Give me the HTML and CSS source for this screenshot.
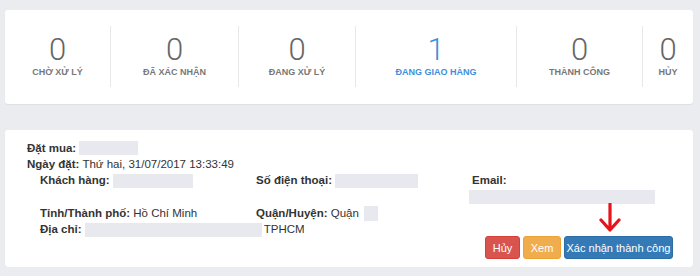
FILE: index.html
```html
<!DOCTYPE html>
<html lang="vi">
<head>
<meta charset="utf-8">
<link rel="stylesheet" href="styles.css">
</head>
<body>
<div class="card stats">
  <div class="stat"><div class="num">0</div><div class="lbl">CHỜ XỬ LÝ</div></div>
  <div class="stat"><div class="num">0</div><div class="lbl">ĐÃ XÁC NHẬN</div></div>
  <div class="stat"><div class="num">0</div><div class="lbl">ĐANG XỬ LÝ</div></div>
  <div class="stat active"><div class="num">1</div><div class="lbl">ĐANG GIAO HÀNG</div></div>
  <div class="stat"><div class="num">0</div><div class="lbl">THÀNH CÔNG</div></div>
  <div class="stat"><div class="num">0</div><div class="lbl">HỦY</div></div>
</div>

<div class="card order">
  <div class="line"><b>Đặt mua:</b> <span class="redact r-order"></span></div>
  <div class="line"><b>Ngày đặt:</b> Thứ hai, 31/07/2017 13:33:49</div>
  <div class="info">
    <div class="cell"><div class="line"><b>Khách hàng:</b> <span class="redact r-name"></span></div></div>
    <div class="cell"><div class="line"><b>Số điện thoại:</b> <span class="redact r-phone"></span></div></div>
    <div class="cell"><div class="line"><b>Email:</b></div><div class="redact r-email"></div></div>
    <div class="cell"><div class="line"><b>Tỉnh/Thành phố:</b> Hồ Chí Minh</div></div>
    <div class="cell"><div class="line"><b>Quận/Huyện:</b> Quận <span class="redact r-district"></span></div></div>
    <div class="cell"></div>
    <div class="cell wide"><div class="line"><b>Địa chỉ:</b> <span class="redact r-addr"></span>TPHCM</div></div>
  </div>
  <div class="actions">
    <button class="btn btn-red">Hủy</button>
    <button class="btn btn-orange">Xem</button>
    <button class="btn btn-blue">Xác nhận thành công</button>
  </div>
  <svg class="arrow" width="22" height="30" viewBox="0 0 22 30">
    <path d="M11 1 V27 M2 17 L11 27 L20 17" fill="none" stroke="#e8121b" stroke-width="3.2" stroke-linecap="round" stroke-linejoin="round"/>
  </svg>
</div>
</body>
</html>
```

FILE: styles.css
```css
html, body {
  margin: 0;
  padding: 0;
}
body {
  background: #ebecf0;
  font-family: "Liberation Sans", Arial, sans-serif;
  color: #333;
  padding: 10px 7px 0 5px;
}
.card {
  background: #fff;
  border-radius: 3px;
  box-shadow: 0 1px 1px rgba(0, 0, 0, 0.06);
}
.stats {
  height: 94px;
  box-sizing: border-box;
  padding-top: 16px;
  display: grid;
  grid-template-columns: 105px 128px 117px 161px 126px 1fr;
}
.stat {
  height: 61px;
  box-sizing: border-box;
  padding-top: 7px;
  text-align: center;
  border-left: 1px solid #e8e8e8;
}
.stat:first-child {
  border-left: none;
}
.num {
  font-family: Roboto, "Liberation Sans", sans-serif;
  font-weight: 300;
  font-size: 31px;
  line-height: 34px;
  color: #666;
}
.lbl {
  font-size: 9px;
  line-height: 12px;
  font-weight: bold;
  color: #777;
  margin-top: -1px;
}
.active .num,
.active .lbl {
  color: #3d8fdc;
}
.order {
  position: relative;
  margin-top: 26px;
  height: 137px;
  box-sizing: border-box;
  padding: 10px 20px 0 22px;
  font-size: 11.5px;
}
.line {
  line-height: 16px;
  white-space: nowrap;
}
.line b {
  color: #333;
}
.redact {
  display: inline-block;
  background: #e8e9ee;
  height: 14px;
  vertical-align: middle;
}
.r-order { width: 59px; margin-top: -2px; }
.r-name { width: 80px; }
.r-phone { width: 83px; }
.r-district { width: 14px; height: 15px; margin-left: 2px; }
.r-addr { width: 177px; margin-right: 2px; }
.r-email {
  display: block;
  width: 186px;
  margin: 2px 0 0 -3px;
}
.info {
  margin-left: 13px;
  display: grid;
  grid-template-columns: 216px 216px 216px;
}
.cell.wide {
  grid-column: 1 / 4;
}
.info .cell:nth-child(1),
.info .cell:nth-child(2),
.info .cell:nth-child(3) {
  height: 33px;
}
.actions {
  display: flex;
  justify-content: flex-end;
  gap: 3px;
  margin-top: -1px;
}
.btn {
  font-family: "Liberation Sans", Arial, sans-serif;
  font-size: 11px;
  color: #fff;
  height: 23px;
  padding: 0;
  border-radius: 3px;
  border: 1px solid transparent;
  cursor: pointer;
}
.btn-red { background: #d9534f; border-color: #d43f3a; width: 35px; }
.btn-orange { background: #f0ad4e; border-color: #eea236; width: 38px; }
.btn-blue { background: #337ab7; border-color: #2e6da4; width: 109px; }
.arrow {
  position: absolute;
  left: 594px;
  top: 73px;
}
```
